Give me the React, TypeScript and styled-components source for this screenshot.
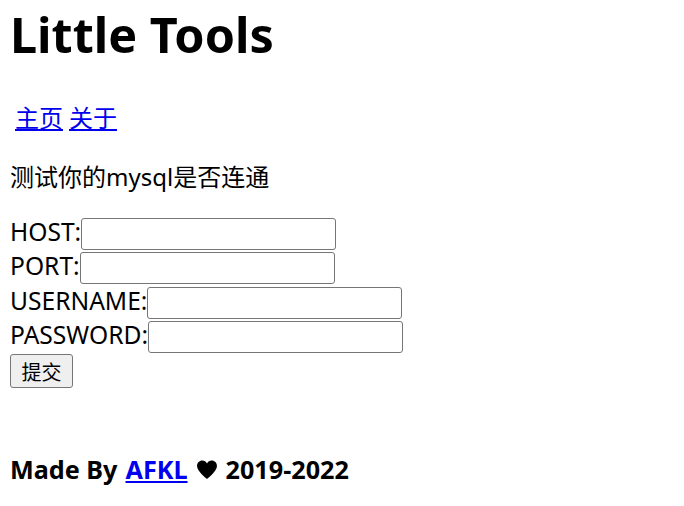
import styled, { createGlobalStyle } from "styled-components";

const GlobalStyle = createGlobalStyle`
  body {
    margin: 10px;
    background: #fff;
    color: #000;
    font-family: "Noto Sans", "Noto Sans CJK SC", sans-serif;
    font-size: 24px;
  }
`;

const Title = styled.h1`
  margin: 0;
  font-size: 48.5px;
  line-height: 48px;
  font-weight: 700;
`;

const Nav = styled.nav`
  margin-top: 42px;
  padding-left: 5px;
  display: flex;
  gap: 6px;
  line-height: 34px;
`;

const NavLink = styled.a`
  color: #0000ee;
  text-decoration: underline;
  font-family: "Noto Sans CJK SC", sans-serif;
`;

const Intro = styled.p`
  margin: 26px 0 0;
  line-height: 34px;
`;

const Form = styled.form`
  margin-top: 23px;
`;

const Row = styled.div`
  display: flex;
  align-items: center;
  height: 34.3px;
`;

const Label = styled.label`
  white-space: nowrap;
  font-size: 24.6px;
  padding-bottom: 5px;
`;

const Input = styled.input`
  box-sizing: border-box;
  width: 255px;
  height: 32px;
  margin: 0;
  padding: 1px 2px;
  border: 1px solid #767676;
  border-radius: 3px;
  background: #fff;
  font-size: 16px;
`;

const Submit = styled.button`
  box-sizing: border-box;
  display: block;
  width: 63px;
  height: 34px;
  margin: 0;
  padding: 0;
  border: 1px solid #767676;
  border-radius: 3px;
  background: #efefef;
  color: #000;
  font-family: "Noto Sans CJK SC", sans-serif;
  font-size: 20px;
`;

const Footer = styled.footer`
  margin-top: 64px;
  display: flex;
  align-items: center;
  gap: 8px;
  font-size: 25.2px;
  font-weight: 700;
  line-height: 34px;
`;

const AuthorLink = styled.a`
  color: #0000ee;
  text-decoration: underline;
`;

const Heart = () => (
  <svg width="22" height="19" viewBox="0 0 24 21" aria-hidden="true">
    <path
      d="M12 21 C10.5 19.6 1 12.4 1 6.6 C1 3.2 3.6 0.6 6.8 0.6 C9.1 0.6 11 2 12 3.8 C13 2 14.9 0.6 17.2 0.6 C20.4 0.6 23 3.2 23 6.6 C23 12.4 13.5 19.6 12 21 Z"
      fill="#000"
    />
  </svg>
);

const fields = ["HOST", "PORT", "USERNAME", "PASSWORD"];

export default function App() {
  return (
    <>
      <GlobalStyle />
      <Title>Little Tools</Title>
      <Nav>
        <NavLink href="#">主页</NavLink>
        <NavLink href="#">关于</NavLink>
      </Nav>
      <Intro>测试你的mysql是否连通</Intro>
      <Form onSubmit={(e) => e.preventDefault()}>
        {fields.map((f) => (
          <Row key={f}>
            <Label>{f}:</Label>
            <Input type={f === "PASSWORD" ? "password" : "text"} />
          </Row>
        ))}
        <Submit type="submit">提交</Submit>
      </Form>
      <Footer>
        <span>Made By</span>
        <AuthorLink href="#">AFKL</AuthorLink>
        <Heart />
        <span>2019-2022</span>
      </Footer>
    </>
  );
}
